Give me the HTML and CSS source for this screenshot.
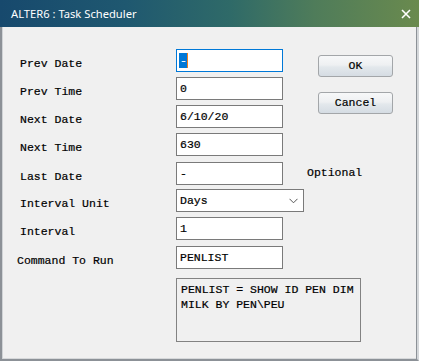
FILE: index.html
```html
<!DOCTYPE html>
<html>
<head>
<meta charset="utf-8">
<link rel="stylesheet" href="styles.css">
</head>
<body>
<div class="window">
  <div class="titlebar">
    <span class="title">ALTER6 : Task Scheduler</span>
    <svg class="close" width="10" height="10" viewBox="0 0 10 10"><path d="M1 1 L9 9 M9 1 L1 9" stroke="#fff" stroke-width="1.6" fill="none"/></svg>
  </div>
  <div class="client">
    <div class="form">
      <div class="label">Prev Date</div>
      <div class="cell"><div class="field focused"><span class="sel">-</span><span class="caret"></span></div></div>

      <div class="label">Prev Time</div>
      <div class="cell"><div class="field">0</div></div>

      <div class="label">Next Date</div>
      <div class="cell"><div class="field">6/10/20</div></div>

      <div class="label">Next Time</div>
      <div class="cell"><div class="field">630</div></div>

      <div class="label plus">Last Date</div>
      <div class="cell plus"><div class="field">-</div><span class="note">Optional</span></div>

      <div class="label">Interval Unit</div>
      <div class="cell"><div class="select"><span>Days</span><svg width="9" height="6" viewBox="0 0 9 6"><path d="M0.5 0.8 L4.5 4.8 L8.5 0.8" stroke="#555" stroke-width="1" fill="none"/></svg></div></div>

      <div class="label">Interval</div>
      <div class="cell"><div class="field">1</div></div>

      <div class="label plus shift">Command To Run</div>
      <div class="cell plus"><div class="field">PENLIST</div></div>

      <div class="spacer"></div>
      <div class="cell memo-cell"><div class="memo">PENLIST = SHOW ID PEN DIM MILK BY PEN\PEU</div></div>
    </div>
    <div class="buttons">
      <div class="btn">OK</div>
      <div class="btn">Cancel</div>
    </div>
  </div>
</div>
</body>
</html>
```
FILE: styles.css
```css
html, body {
  margin: 0;
  padding: 0;
  background: #ffffff;
}
body {
  width: 422px;
  height: 362px;
  overflow: hidden;
}
.window {
  width: 419px;
  height: 361px;
  display: flex;
  flex-direction: column;
}
.titlebar {
  height: 27px;
  flex: none;
  display: flex;
  align-items: center;
  justify-content: space-between;
  padding: 0 8px 0 11px;
  background: linear-gradient(90deg, #17496d 0%, #1f5870 30%, #2f6a68 55%, #4f7c5a 75%, #6a8a4e 100%);
}
.title {
  font-family: "Noto Sans", "Open Sans", sans-serif;
  font-size: 11.2px;
  color: #ffffff;
  line-height: 27px;
}
.close {
  display: block;
}
.client {
  flex: 1;
  display: flex;
  background: #f0f0f0;
  border-left: 2px solid #8c9197;
  border-right: 2px solid #d4d7da;
  border-bottom: 2px solid #8c9197;
  box-shadow: inset 1px 0 #d0d3d6, inset -1px 0 #8c9197, inset 0 -1px #d6d8da;
  padding: 22px 0 0 18px;
  font-family: "Liberation Mono", "Courier New", monospace;
  font-size: 11.5px;
  color: #000000;
  -webkit-text-stroke: 0.2px #000000;
}
.form {
  display: grid;
  grid-template-columns: 156px 128px;
  grid-auto-rows: 23px;
  row-gap: 5px;
  align-content: start;
}
.label {
  padding-top: 8px;
  line-height: 14px;
  white-space: nowrap;
}
.label.shift {
  margin-left: -3px;
}
.plus {
  margin-top: 1px;
}
.cell {
  display: flex;
  align-items: flex-start;
  white-space: nowrap;
}
.field {
  box-sizing: border-box;
  width: 107px;
  height: 23px;
  border: 1px solid #7a7a7a;
  background: #ffffff;
  padding: 0 3px;
  line-height: 21px;
  display: flex;
  align-items: center;
  flex: none;
}
.field.focused {
  border-color: #0078d7;
  padding-left: 2px;
}
.sel {
  background: #0078d7;
  color: #ffffff;
  -webkit-text-stroke: 0.2px #ffffff;
  height: 15px;
  line-height: 15px;
  padding: 0 0 0 1px;
  width: 7px;
}
.caret {
  width: 1px;
  height: 15px;
  background: #f08020;
}
.note {
  margin-left: 24px;
  padding-top: 4px;
  line-height: 14px;
}
.select {
  box-sizing: border-box;
  width: 128px;
  height: 23px;
  border: 1px solid #7a7a7a;
  background: #ffffff;
  padding: 0 5px 0 3px;
  display: flex;
  align-items: center;
  justify-content: space-between;
  line-height: 21px;
}
.spacer {
  height: 1px;
}
.memo-cell {
  margin-top: 5px;
}
.memo {
  box-sizing: border-box;
  width: 185px;
  height: 64px;
  border: 1px solid #828282;
  background: #f0f0f0;
  padding: 3px 4px;
  line-height: 15px;
  white-space: normal;
  flex: none;
}
.buttons {
  display: flex;
  flex-direction: column;
  gap: 15px;
  margin-left: 14px;
  margin-top: 6px;
}
.btn {
  box-sizing: border-box;
  width: 75px;
  height: 22px;
  border: 1px solid #a3a6a9;
  border-radius: 3px;
  background: linear-gradient(#f7f8f9 0%, #eef0f2 45%, #e3e8ec 55%, #d5dce3 100%);
  display: flex;
  align-items: center;
  justify-content: center;
  line-height: 20px;
}
```
